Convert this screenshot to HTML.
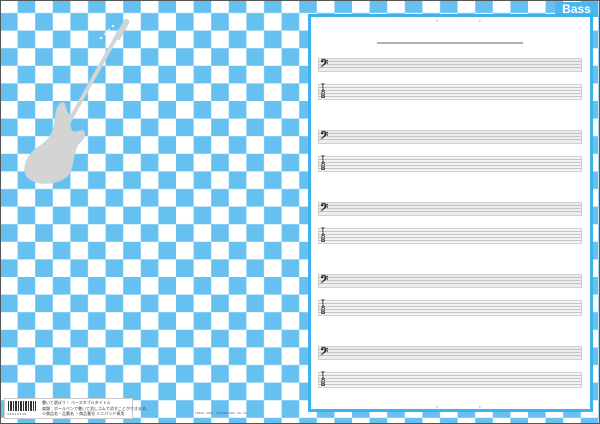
<!DOCTYPE html>
<html><head><meta charset="utf-8"><style>
*{margin:0;padding:0;box-sizing:border-box}
body{width:600px;height:424px;overflow:hidden;background:#fff;position:relative;font-family:"Liberation Sans","Noto Sans CJK JP",sans-serif}
.abs{position:absolute}
.panel{left:308px;top:14px;width:285px;height:398px;background:#fff;border:3px solid #3eb2ec}
.sys{position:absolute;left:318px;width:264px}
.band{position:absolute;left:0;width:264px;background:#ececec;border:1px solid #cfcfcf}
.ln{position:absolute;left:0;width:264px;height:1px;background:#c4c4c4}
.cl{position:absolute;left:2px;font-size:13px;font-weight:bold;color:#222;line-height:1}
</style></head><body>
<svg class="abs" style="left:0;top:0" width="600" height="424">
<defs><pattern id="c" x="0" y="-4.6" width="35.2" height="35.2" patternUnits="userSpaceOnUse">
<rect x="17.6" y="0" width="17.6" height="17.6" fill="#66c0f0"/><rect x="0" y="17.6" width="17.6" height="17.6" fill="#66c0f0"/></pattern></defs>
<rect width="600" height="424" fill="#fff"/>
<rect width="600" height="424" fill="url(#c)"/>
<rect x="0.5" y="0.5" width="599" height="423" fill="none" stroke="#555" stroke-width="1"/>
<g fill="#d4d4d4" stroke="#b8d4e6" stroke-width="1">
<line x1="70" y1="120" x2="118" y2="34" stroke="#d4d4d4" stroke-width="4"/>
<path d="M114,38 L124,21 C126,18 130,20 128,24 L119,40 Z"/>
<path d="M60,104 C56,108 55,116 55,122 C53,132 50,140 40,146 C30,152 24,162 25,172 C27,181 38,184 50,183 C60,182 68,178 71,170 C74,160 74,150 78,144 C83,140 86,136 84,131 C80,129 76,134 72,131 C69,126 70,122 73,118 L67,112 C66,108 65,104 64,103 C63,102 61,103 60,104 Z"/>
</g>
<g fill="#e8e8e8"><circle cx="101" cy="38" r="1.3"/><circle cx="105" cy="34" r="1.3"/><circle cx="109" cy="30" r="1.3"/><circle cx="113" cy="26" r="1.3"/></g>
</svg>
<div class="abs" style="left:555px;top:2px;width:43px;height:15px;background:#4cb6ee;color:#fff;font-weight:bold;font-size:12px;line-height:15px;text-align:center">Bass</div>
<div class="abs panel"></div>
<div class="abs" style="left:377px;top:42px;width:146px;height:2px;background:#b0b0b0"></div>
<div class="abs" style="left:330px;top:18px;width:250px;font-size:4px;color:#666;letter-spacing:20px">·· ··▪·▪··</div>
<div class="abs" style="left:330px;top:404px;width:250px;font-size:4px;color:#666;letter-spacing:20px">·· ··▪·▪··</div>

<div class="sys" style="top:58px">
<div class="band" style="top:0;height:14px"></div>
<div class="ln" style="top:3px"></div><div class="ln" style="top:6px"></div><div class="ln" style="top:9px"></div>
<div class="cl" style="top:0">𝄢</div>
<div class="band" style="top:26px;height:16px;background:#f4f4f4"></div>
<div class="ln" style="top:29px"></div><div class="ln" style="top:32px"></div><div class="ln" style="top:35px"></div><div class="ln" style="top:38px"></div>
<div class="cl" style="top:27px;font-size:6px;line-height:5px;left:3px">T<br>A<br>B</div>
</div>
<div class="sys" style="top:130px">
<div class="band" style="top:0;height:14px"></div>
<div class="ln" style="top:3px"></div><div class="ln" style="top:6px"></div><div class="ln" style="top:9px"></div>
<div class="cl" style="top:0">𝄢</div>
<div class="band" style="top:26px;height:16px;background:#f4f4f4"></div>
<div class="ln" style="top:29px"></div><div class="ln" style="top:32px"></div><div class="ln" style="top:35px"></div><div class="ln" style="top:38px"></div>
<div class="cl" style="top:27px;font-size:6px;line-height:5px;left:3px">T<br>A<br>B</div>
</div>
<div class="sys" style="top:202px">
<div class="band" style="top:0;height:14px"></div>
<div class="ln" style="top:3px"></div><div class="ln" style="top:6px"></div><div class="ln" style="top:9px"></div>
<div class="cl" style="top:0">𝄢</div>
<div class="band" style="top:26px;height:16px;background:#f4f4f4"></div>
<div class="ln" style="top:29px"></div><div class="ln" style="top:32px"></div><div class="ln" style="top:35px"></div><div class="ln" style="top:38px"></div>
<div class="cl" style="top:27px;font-size:6px;line-height:5px;left:3px">T<br>A<br>B</div>
</div>
<div class="sys" style="top:274px">
<div class="band" style="top:0;height:14px"></div>
<div class="ln" style="top:3px"></div><div class="ln" style="top:6px"></div><div class="ln" style="top:9px"></div>
<div class="cl" style="top:0">𝄢</div>
<div class="band" style="top:26px;height:16px;background:#f4f4f4"></div>
<div class="ln" style="top:29px"></div><div class="ln" style="top:32px"></div><div class="ln" style="top:35px"></div><div class="ln" style="top:38px"></div>
<div class="cl" style="top:27px;font-size:6px;line-height:5px;left:3px">T<br>A<br>B</div>
</div>
<div class="sys" style="top:346px">
<div class="band" style="top:0;height:14px"></div>
<div class="ln" style="top:3px"></div><div class="ln" style="top:6px"></div><div class="ln" style="top:9px"></div>
<div class="cl" style="top:0">𝄢</div>
<div class="band" style="top:26px;height:16px;background:#f4f4f4"></div>
<div class="ln" style="top:29px"></div><div class="ln" style="top:32px"></div><div class="ln" style="top:35px"></div><div class="ln" style="top:38px"></div>
<div class="cl" style="top:27px;font-size:6px;line-height:5px;left:3px">T<br>A<br>B</div>
</div>

<div class="abs" style="left:4px;top:398px;width:129px;height:21px;background:#fff;border:1px solid #ccc"></div>
<div class="abs" style="left:8px;top:401px;width:28px;height:10px;background:repeating-linear-gradient(90deg,#333 0 1px,#fff 1px 2px,#333 2px 4px,#fff 4px 5px)"></div>
<div class="abs" style="left:7px;top:412px;font-size:3px;color:#333">4 9 0 1 2 3 4 5</div>
<div class="abs" style="left:42px;top:400px;font-size:4px;line-height:5.5px;color:#333;white-space:nowrap">書いて遊ぼう！ ベースタブルタイトル<br>楽譜：ボールペンで書いて消しゴムで消すことができます。<br>※商品名・品番名 ・商品番号 ミニバンド専用</div>
<div class="abs" style="left:195px;top:411px;font-size:3px;color:#666;white-space:nowrap">TAB-B · 1200 · 4901480-0000 · 06 · 0H</div>
</body></html>
